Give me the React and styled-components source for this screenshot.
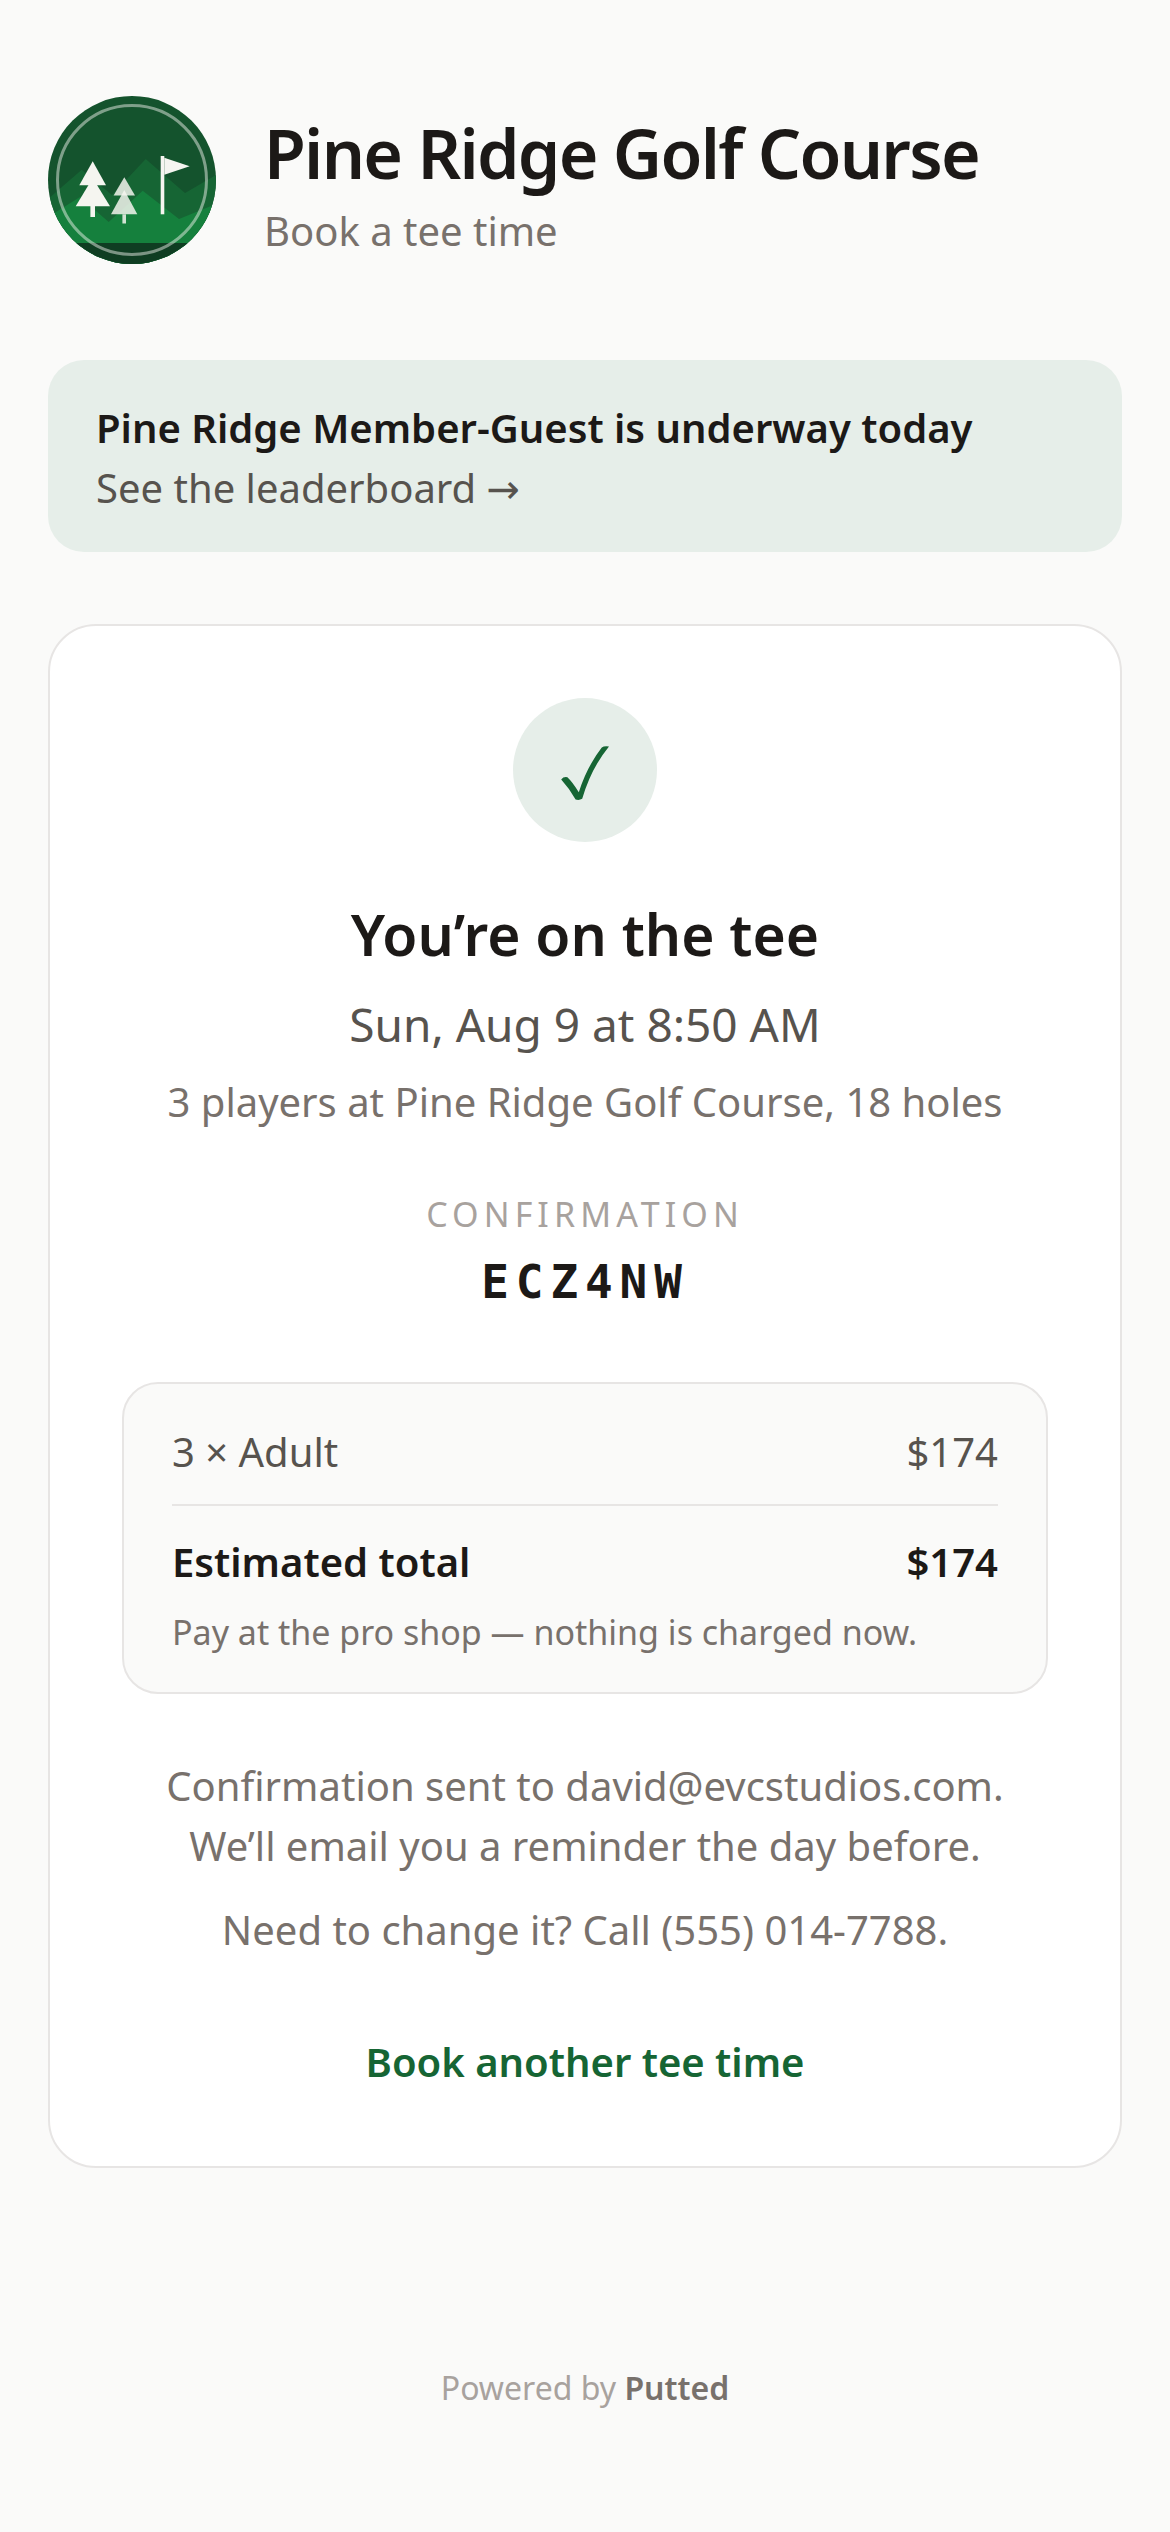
import React from "react";
import styled, { createGlobalStyle } from "styled-components";

const GlobalStyle = createGlobalStyle`
  :root {
    --ink: #1c1917;
    --stone-600: #57534e;
    --stone-500: #78716c;
    --stone-400: #a8a29e;
    --line: #e7e5e4;
    --paper: #fafaf9;
    --green: #166534;
    --green-tint: #e6eee9;
  }

  *,
  *::before,
  *::after {
    box-sizing: border-box;
  }

  body {
    margin: 0;
    background: var(--paper);
    color: var(--ink);
    font-family: "Segoe UI", "Noto Sans", "Open Sans", sans-serif;
    font-size: 40px;
    line-height: 60px;
  }

  h1,
  h2,
  p,
  dl,
  dd {
    margin: 0;
  }
`;

const Logo = () => (
  <LogoSvg viewBox="0 0 168 168" role="img" aria-label="Pine Ridge">
    <defs>
      <clipPath id="badge">
        <circle cx="84" cy="84" r="84" />
      </clipPath>
    </defs>
    <g clipPath="url(#badge)">
      <rect width="168" height="168" fill="#14532d" />
      <path
        d="M0 103 L33.7 73.7 L64 99 L97.7 63 L137 97 L168 79 V168 H0 Z"
        fill="#166534"
      />
      <path
        d="M0 121 L32 101 L60.7 126 L94.7 94.7 L131 123 L168 108 V168 H0 Z"
        fill="#15803d"
      />
      <rect y="147" width="168" height="21" fill="#0f3d22" />
    </g>
    <g fill="#f5f5f0">
      <path d="M44.7 65.3 L58 89.3 H31.3 Z" />
      <path d="M44.7 82 L62 110.3 H27.7 Z" />
      <rect x="42.4" y="110" width="4.6" height="11" />
      <path d="M112.7 60 h3.6 v58.3 h-3.6 Z" />
      <path d="M116.3 61.7 L141.7 70.3 L116.3 78.7 Z" />
    </g>
    <g fill="#f5f5f0" fillOpacity="0.84">
      <path d="M76.3 81.3 L87 99.6 H65.6 Z" />
      <path d="M76.3 94 L89.3 118.3 H63 Z" />
      <rect x="74.4" y="118.3" width="3.6" height="9.2" />
    </g>
    <circle
      cx="84"
      cy="84"
      r="74.5"
      fill="none"
      stroke="#f5f5f0"
      strokeOpacity="0.48"
      strokeWidth="3"
    />
  </LogoSvg>
);

const Check = () => (
  <CheckSvg viewBox="0 0 48 54" aria-hidden="true">
    <path
      d="M0.2 33.4 Q2.5 30.4 6.4 31.2 Q11.5 36 17.8 46.2 Q26 20.5 40.8 1.6 Q43 -0.4 48 0.4 Q30 22.5 21.2 52.8 Q18 54.6 14.6 53.4 Q8.5 42.5 0.2 33.4 Z"
      fill="currentColor"
    />
  </CheckSvg>
);

const App = () => (
  <>
    <GlobalStyle />
    <Page>
      <Header>
        <Logo />
        <Titles>
          <CourseName>Pine Ridge Golf Course</CourseName>
          <Muted>Book a tee time</Muted>
        </Titles>
      </Header>

      <Banner href="#leaderboard">
        <strong>Pine Ridge Member-Guest is underway today</strong>
        <span>
          See the leaderboard <Arrow>→</Arrow>
        </span>
      </Banner>

      <Card>
        <Badge>
          <Check />
        </Badge>
        <Heading>You’re on the tee</Heading>
        <When>Sun, Aug 9 at 8:50 AM</When>
        <Muted $mt={12}>3 players at Pine Ridge Golf Course, 18 holes</Muted>

        <Label>Confirmation</Label>
        <Code>ECZ4NW</Code>

        <Summary>
          <dl>
            <Row>
              <dt>3 × Adult</dt>
              <dd>$174</dd>
            </Row>
            <Row $total>
              <dt>Estimated total</dt>
              <dd>$174</dd>
            </Row>
          </dl>
          <Note>Pay at the pro shop — nothing is charged now.</Note>
        </Summary>

        <Muted $mt={62}>
          Confirmation sent to david@evcstudios.com.
          <br />
          We’ll email you a reminder the day before.
        </Muted>
        <Muted $mt={24}>Need to change it? Call (555) 014-7788.</Muted>
        <BookAgain type="button">Book another tee time</BookAgain>
      </Card>

      <Footer>
        Powered by <a href="#putted">Putted</a>
      </Footer>
    </Page>
  </>
);

const Page = styled.main`
  max-width: 1344px;
  margin: 0 auto;
  padding: 96px 48px;
`;

const Header = styled.header`
  display: flex;
  align-items: center;
  gap: 48px;
`;

const Titles = styled.div`
  padding-top: 6px;
`;

const LogoSvg = styled.svg`
  flex: none;
  width: 168px;
  height: 168px;
`;

const CourseName = styled.h1`
  font-size: 68px;
  line-height: 96px;
  font-weight: 600;
  letter-spacing: -0.025em;
`;

const Muted = styled.p`
  margin-top: ${({ $mt = 0 }) => $mt}px;
  color: var(--stone-500);
`;

const Banner = styled.a`
  display: flex;
  flex-direction: column;
  margin-top: 96px;
  padding: 38px 48px 34px;
  border-radius: 36px;
  background: var(--green-tint);
  color: var(--stone-600);
  text-decoration: none;

  strong {
    color: var(--ink);
    font-weight: 600;
  }
`;

const Arrow = styled.span`
  font-family: "DejaVu Sans", sans-serif;
  line-height: 1;
`;

const Card = styled.section`
  display: flex;
  flex-direction: column;
  align-items: center;
  margin-top: 72px;
  padding: 72px;
  border: 2px solid var(--line);
  border-radius: 48px;
  background: #fff;
  text-align: center;
`;

const Badge = styled.div`
  display: flex;
  align-items: center;
  justify-content: center;
  width: 144px;
  height: 144px;
  padding-top: 6px;
  border-radius: 50%;
  background: var(--green-tint);
  color: var(--green);
`;

const CheckSvg = styled.svg`
  width: 48px;
  height: 54px;
`;

const Heading = styled.h2`
  margin-top: 50px;
  font-size: 57px;
  line-height: 84px;
  font-weight: 600;
`;

const When = styled.p`
  margin-top: 12px;
  color: var(--stone-600);
  font-size: 46px;
  line-height: 72px;
`;

const Label = styled.p`
  margin-top: 58px;
  color: var(--stone-400);
  font-size: 34px;
  line-height: 48px;
  letter-spacing: 0.15em;
  text-transform: uppercase;
`;

const Code = styled.p`
  margin-top: 8px;
  font-family: Consolas, "DejaVu Sans Mono", monospace;
  font-size: 46px;
  line-height: 72px;
  font-weight: 700;
  letter-spacing: 0.15em;
`;

const Summary = styled.div`
  align-self: stretch;
  margin-top: 64px;
  padding: 38px 48px 36px;
  border: 2px solid var(--line);
  border-radius: 36px;
  background: var(--paper);
  text-align: left;
`;

const Row = styled.div`
  display: flex;
  justify-content: space-between;
  color: var(--stone-600);

  ${({ $total }) =>
    $total &&
    `
    margin-top: 22px;
    padding-top: 26px;
    border-top: 2px solid var(--line);
    color: var(--ink);
    font-weight: 600;
  `}
`;

const Note = styled.p`
  margin-top: 16px;
  color: var(--stone-500);
  font-size: 34px;
  line-height: 48px;
`;

const BookAgain = styled.button`
  margin-top: 72px;
  padding: 0 0 2px;
  border: 0;
  background: none;
  color: var(--green);
  font: inherit;
  font-weight: 600;
  cursor: pointer;
`;

const Footer = styled.footer`
  margin-top: 196px;
  color: var(--stone-400);
  font-size: 32px;
  line-height: 48px;
  text-align: center;

  a {
    color: var(--stone-500);
    font-weight: 600;
    text-decoration: none;
  }
`;

export default App;
